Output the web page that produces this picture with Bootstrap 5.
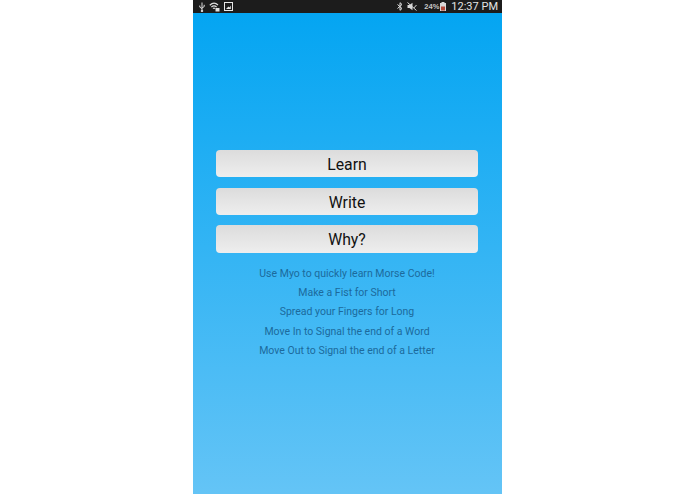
<!DOCTYPE html>
<html lang="en">
<head>
<meta charset="utf-8">
<title>Morse Code</title>
<link rel="stylesheet" href="https://cdn.jsdelivr.net/npm/bootstrap@5.3.0/dist/css/bootstrap.min.css">
<style>
html, body { background: #fff; height: 100%; overflow: hidden; }
body { font-family: Roboto, "Liberation Sans", sans-serif; }
.phone-frame { width: 309px; height: 494px; margin-left: 193px; }
.status-strip { height: 13px; background: #1c1c1c; color: #d8d8d8; padding: 0 4px 0 6px; }
.status-strip svg { display: block; }
.status-pct { font-size: 7.5px; line-height: 13px; color: #c8c8c8; font-family: "Liberation Sans", sans-serif; font-weight: 700; margin-left: 7px; margin-right: 1px; }
.status-time { font-size: 11px; line-height: 13px; color: #e4e4e4; margin-left: 5px; }
.gap-speaker { margin-left: 4px; }
.app-area { background: linear-gradient(#04a5f2, #64c4f6); padding: 137px 24px 0 23px; }
.act-btn { height: 27.3px; line-height: 25.3px; padding: 2px 0 0; border: 0; border-radius: 4px; width: 100%; color: #111; font-size: 15.8px; background: linear-gradient(#dcdcdc, #eeeeee); }
.act-btn:hover, .act-btn:active { background: linear-gradient(#dcdcdc, #eeeeee) !important; color: #111 !important; }
.btn-stack { gap: 10.4px; }
.hint-stack { margin-top: 11px; color: #1c6a9c; font-size: 10.5px; line-height: 19.3px; }
</style>
</head>
<body class="m-0">
<div class="phone-frame d-flex flex-column">
  <div class="status-strip d-flex align-items-center justify-content-between">
    <div class="d-flex align-items-center gap-1">
      <svg width="6" height="10" viewBox="0 0 6 10" fill="none" stroke="#e0e0e0" stroke-width="1"><path d="M3 0.5V9.5M0.8 3.5V5.2L3 6.6M5.2 2.8V4.6L3 6"/><circle cx="3" cy="9" r=".8" fill="#e0e0e0"/></svg>
      <svg width="11" height="10" viewBox="0 0 11 10" fill="none" stroke="#e0e0e0" stroke-width="1.2"><path d="M0.8 3.2C3.5 0.6 6.5 0.6 9 3M2.4 5C4 3.6 6 3.6 7.6 5M4 6.7C4.6 6.1 5.4 6.1 6 6.7"/><rect x="6.5" y="6" width="4" height="3.5" fill="#e0e0e0" stroke="none"/></svg>
      <svg width="9" height="9" viewBox="0 0 9 9"><rect x=".5" y=".5" width="8" height="8" fill="#1c1c1c" stroke="#e8e8e8"/><path d="M2 7L4.5 4.6L5.5 5.6L6.8 3.5V7Z" fill="#e8e8e8"/></svg>
    </div>
    <div class="d-flex align-items-center">
      <svg width="6" height="9" viewBox="0 0 6 9" fill="none" stroke="#e0e0e0" stroke-width="1"><path d="M0.5 2.5L5 6.5L3 8.3V0.7L5 2.5L0.5 6.5"/></svg>
      <svg class="gap-speaker" width="10" height="9" viewBox="0 0 10 9" fill="#d8d8d8"><path d="M0.5 3H2.5L5.5 0.8V8.2L2.5 6H0.5Z"/><path d="M0.5 0.5L9.5 8.5M9.5 3L6.8 6" stroke="#d8d8d8" stroke-width="1" fill="none"/></svg>
      <span class="status-pct">24%</span>
      <svg width="6" height="9" viewBox="0 0 6 9"><rect x="0" y="1" width="6" height="8" fill="#d8d8d8"/><rect x="1" y="4.5" width="4" height="4" fill="#b5483a"/><rect x="1.5" y="0" width="3" height="1" fill="#d8d8d8"/></svg>
      <span class="status-time">12:37 PM</span>
    </div>
  </div>
  <main class="app-area flex-grow-1">
    <div class="btn-stack d-flex flex-column">
      <button type="button" class="btn act-btn">Learn</button>
      <button type="button" class="btn act-btn">Write</button>
      <button type="button" class="btn act-btn">Why?</button>
    </div>
    <div class="hint-stack text-center">
      <div>Use Myo to quickly learn Morse Code!</div>
      <div>Make a Fist for Short</div>
      <div>Spread your Fingers for Long</div>
      <div>Move In to Signal the end of a Word</div>
      <div>Move Out to Signal the end of a Letter</div>
    </div>
  </main>
</div>
<script src="https://cdn.jsdelivr.net/npm/bootstrap@5.3.0/dist/js/bootstrap.bundle.min.js"></script>
</body>
</html>
